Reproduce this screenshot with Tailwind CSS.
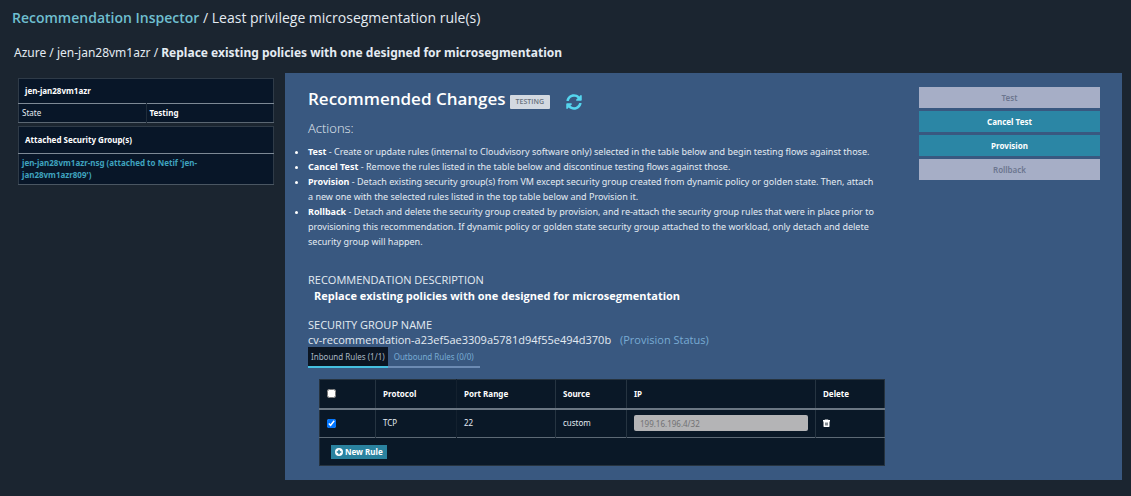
<!DOCTYPE html>
<html lang="en">
<head>
    <meta charset="UTF-8">
    <meta name="viewport" content="width=device-width, initial-scale=1.0">
    <title>Recommendation Inspector</title>
    <script src="https://cdn.jsdelivr.net/npm/@tailwindcss/browser@4"></script>
</head>
<body class="bg-[#1b2530] font-['Noto_Sans',sans-serif] text-[8px] leading-3 text-[#e4ebf2] min-h-screen">
<header class="pt-2 px-3">
    <h1 class="font-['Open_Sans',sans-serif] text-[14px] leading-5"><a href="#" class="font-semibold text-[#6fbfcf]">Recommendation Inspector</a> / Least privilege microsegmentation rule(s)</h1>
    <p class="mt-[15px] px-0.5 text-[12px] leading-5">Azure / jen-jan28vm1azr / <strong class="font-bold">Replace existing policies with one designed for microsegmentation</strong></p>
</header>

<main class="flex items-start pt-2.5 pl-[18px] pr-[9px] pb-4">
    <!-- Workload details -->
    <aside class="w-64 shrink-0 mt-[5px] mr-[11px]">
        <table class="w-full table-fixed border border-[#2f3b48] bg-[#081628]">
            <thead>
            <tr class="h-[25px] border-b border-[#7d8995]">
                <th colspan="2" class="px-1.5 text-left font-bold text-white">jen-jan28vm1azr</th>
            </tr>
            </thead>
            <tbody>
            <tr class="h-[19px] border-b border-[#5b6773]">
                <td class="px-[3px]">State</td>
                <td class="px-[3px] border-l border-[#1f2c3a] font-bold text-white">Testing</td>
            </tr>
            </tbody>
        </table>
        <table class="mt-[3px] w-full border border-[#2f3b48] bg-[#081628]">
            <thead>
            <tr class="h-[27px] border-b border-[#7d8995]">
                <th class="px-1.5 text-left font-bold text-white">Attached Security Group(s)</th>
            </tr>
            </thead>
            <tbody>
            <tr class="h-[31px] border-b border-[#4a5662]">
                <td class="pl-[3px] pr-12"><a href="#" class="font-bold text-[#3fa3bf]">jen-jan28vm1azr-nsg (attached to Netif 'jen-jan28vm1azr809')</a></td>
            </tr>
            </tbody>
        </table>
    </aside>

    <section class="flex-1 flex items-start bg-[#395880] pt-[14px] pl-[23px] pr-[22px] pb-[14px]">
        <div class="flex-1 min-w-0">
            <div class="flex items-center">
                <h2 class="font-['Open_Sans',sans-serif] text-[17px] leading-6 font-semibold text-white">Recommended Changes</h2>
                <span class="ml-1 mt-1.5 h-3.5 px-1.5 rounded-[1px] bg-[#d3d9e1] font-['Open_Sans',sans-serif] text-[7px] leading-[14px] font-semibold text-[#68717d]">TESTING</span>
                <button type="button" aria-label="Refresh" class="ml-4 mt-1.5 text-[#55d5ee]">
                    <svg class="size-4" viewBox="0 0 512 512" fill="currentColor"><path d="M370.7 133.3C339.5 104 298.9 88 255.8 88c-77.500.1-144.300 53.200-162.800 126.900-1.300 5.400-6.100 9.200-11.700 9.200H24.100c-7.500 0-13.200-6.800-11.800-14.200C33.900 94.900 134.800 8 256 8c66.400 0 126.800 26.100 171.300 68.700L463 41C478.100 25.900 504 36.600 504 57.900V192c0 13.300-10.700 24-24 24H345.900c-21.400 0-32.100-25.900-17-41l41.800-41.700zM32 296h134.100c21.400 0 32.100 25.900 17 41l-41.800 41.800c31.300 29.300 71.800 45.300 114.900 45.300 77.400-.1 144.300-53.100 162.800-126.800 1.300-5.400 6.100-9.200 11.700-9.200h57.300c7.500 0 13.200 6.800 11.800 14.200C478.100 417.100 377.200 504 256 504c-66.400 0-126.800-26.100-171.300-68.700L49 471C33.900 486.100 8 475.400 8 454.100V320c0-13.300 10.700-24 24-24z"/></svg>
                </button>
            </div>
            <h3 class="mt-[7px] font-['Open_Sans',sans-serif] text-[13px] leading-5 font-light">Actions:</h3>

            <ul class="mt-1.5 max-w-[570px] list-disc marker:text-white text-[9px] leading-[15px]">
                <li><strong class="text-white">Test</strong> - Create or update rules (internal to Cloudvisory software only) selected in the table below and begin testing flows against those.</li>
                <li><strong class="text-white">Cancel Test</strong> - Remove the rules listed in the table below and discontinue testing flows against those.</li>
                <li><strong class="text-white">Provision</strong> - Detach existing security group(s) from VM except security group created from dynamic policy or golden state. Then, attach a new one with the selected rules listed in the top table below and Provision it.</li>
                <li><strong class="text-white">Rollback</strong> - Detach and delete the security group created by provision, and re-attach the security group rules that were in place prior to provisioning this recommendation. If dynamic policy or golden state security group attached to the workload, only detach and delete security group will happen.</li>
            </ul>

            <div class="mt-[23px] font-['Open_Sans',sans-serif] text-[11px] leading-4">
                <h4>RECOMMENDATION DESCRIPTION</h4>
                <p class="px-1.5 font-bold text-white">Replace existing policies with one designed for microsegmentation</p>
            </div>
            <div class="mt-[13px] font-['Open_Sans',sans-serif] text-[11px] leading-[15px]">
                <h4>SECURITY GROUP NAME</h4>
                <p>cv-recommendation-a23ef5ae3309a5781d94f55e494d370b <a href="#" class="ml-1.5 text-[#78abd3]">(Provision Status)</a></p>
            </div>

            <!-- Rule tabs -->
            <div role="tablist" class="flex w-fit leading-[19px]">
                <button type="button" role="tab" aria-selected="true" class="px-[3px] bg-[#0b1522] border-b-2 border-[#45bfe0] text-[#a9b7c3]">Inbound Rules (1/1)</button>
                <button type="button" role="tab" aria-selected="false" class="px-1.5 border-b-2 border-[#6c8bb3] text-[#78abd3]">Outbound Rules (0/0)</button>
            </div>

            <table class="mt-[11px] ml-[11px] w-[566px] table-fixed border border-[#26333f] bg-[#0a1827]">
                <colgroup>
                    <col class="w-[56px]"><col class="w-[81px]"><col class="w-[99px]"><col class="w-[71px]"><col class="w-[189px]"><col>
                </colgroup>
                <thead>
                <tr class="h-[29px] border-b-2 border-[#6b7783] text-left text-white">
                    <th class="px-[7px]"><input type="checkbox" aria-label="Select all rules" class="block size-[9px]"></th>
                    <th class="px-[7px] border-l border-[#263441]">Protocol</th>
                    <th class="px-[7px] border-l border-[#14212f]">Port Range</th>
                    <th class="px-[7px] border-l border-[#263441]">Source</th>
                    <th class="px-[7px] border-l border-[#263441]">IP</th>
                    <th class="px-[7px] border-l border-[#263441]">Delete</th>
                </tr>
                </thead>
                <tbody>
                <tr class="h-[29px] border-b border-[#5d6975]">
                    <td class="px-[7px]"><input type="checkbox" checked aria-label="Select rule" class="block size-[9px]"></td>
                    <td class="px-[7px] border-l border-[#263441]">TCP</td>
                    <td class="px-[7px] border-l border-[#14212f]">22</td>
                    <td class="px-[7px] border-l border-[#263441]">custom</td>
                    <td class="px-[7px] border-l border-[#263441]"><input type="text" value="199.16.196.4/32" disabled aria-label="IP" class="block w-full h-4 px-1.5 rounded-[2px] bg-[#b4b4b6] text-[#727274]"></td>
                    <td class="px-[7px] border-l border-[#263441]">
                        <button type="button" aria-label="Delete rule" class="block text-white">
                            <svg class="w-[7px] h-2" viewBox="0 0 14 16" fill="currentColor"><path fill-rule="evenodd" d="M4 1h6l1 1h3v3H0V2h3zM1 5h12v10l-1 1H2l-1-1zM4 7v6h1V7zM6.500 7v6h1V7zM9 7v6h1V7z"/></svg>
                        </button>
                    </td>
                </tr>
                <tr class="h-7">
                    <td colspan="6" class="px-[11px]">
                        <button type="button" class="flex items-center gap-0.5 h-3.5 px-1 bg-[#2a829f] font-bold text-white">
                            <svg class="size-2" viewBox="0 0 16 16" fill="currentColor"><path fill-rule="evenodd" d="M8 0a8 8 0 1 0 0 16A8 8 0 0 0 8 0zM6.500 3.500h3v3h3v3h-3v3h-3v-3h-3v-3h3z"/></svg>
                            New Rule
                        </button>
                    </td>
                </tr>
                </tbody>
            </table>
        </div>

        <div class="w-[181px] shrink-0 flex flex-col gap-[3px] font-bold">
            <button type="button" disabled class="h-[21px] bg-[#a6aec6] font-semibold text-[#6c768f]">Test</button>
            <button type="button" class="h-[21px] bg-[#2b86a5] text-white">Cancel Test</button>
            <button type="button" class="h-[21px] bg-[#2b86a5] text-white">Provision</button>
            <button type="button" disabled class="h-[21px] bg-[#a6aec6] font-semibold text-[#6c768f]">Rollback</button>
        </div>
    </section>
</main>
</body>
</html>
